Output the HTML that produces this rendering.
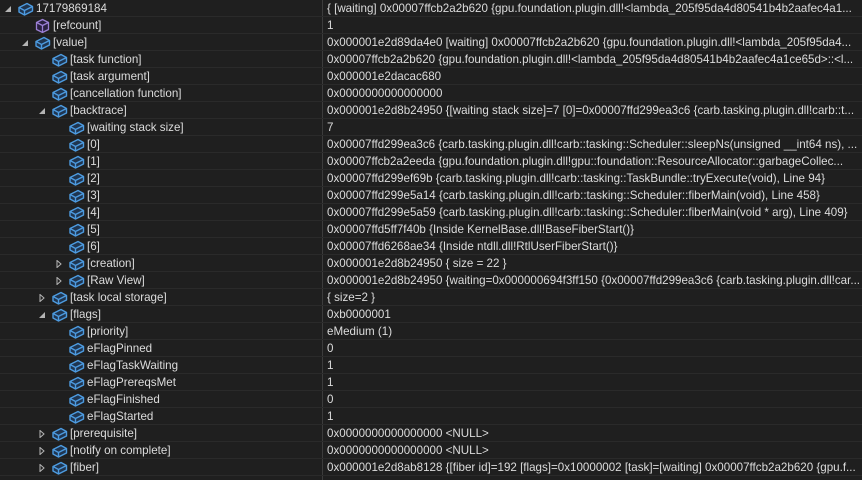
<!DOCTYPE html>
<html><head><meta charset="utf-8"><style>
*{margin:0;padding:0;box-sizing:border-box}
body{width:862px;height:480px;background:#1f1f1f;overflow:hidden;font-family:"Liberation Sans",sans-serif;font-size:11.6px;color:#dcdcdc}
.r{position:relative;height:17px;border-bottom:1px solid #2a2a2a;white-space:nowrap}
.n{position:absolute;left:0;top:0;width:322px;height:16px;overflow:hidden}
.v{position:absolute;left:327px;top:1px;width:535px;height:15px;line-height:16px;overflow:hidden}
.t{position:absolute;top:1px;line-height:16px}
.ic{position:absolute;top:1px}
.ex{position:absolute;top:5px}
.div{position:absolute;left:322px;top:0;width:1px;height:480px;background:#3c3c3c}
</style></head><body>
<svg width="0" height="0" style="position:absolute"><defs>
<g id="b"><path d="M2 6.5 L10 2.5 L15.5 5.5 L15.5 10 L7.5 14 L2 11 Z" fill="#1f3550" stroke="#4d9be0" stroke-width="1.4" stroke-linejoin="round"/><path d="M2 6.5 L7.5 9.5 L15.5 5.5 M7.5 9.5 L7.5 14" fill="none" stroke="#4d9be0" stroke-width="1.4"/></g>
<g id="p"><path d="M8.5 1.5 L14.5 4.5 L14.5 11.5 L8.5 14.5 L2.5 11.5 L2.5 4.5 Z" fill="#2a2040" stroke="#9b7fd4" stroke-width="1.3" stroke-linejoin="round"/><path d="M2.5 4.5 L8.5 7.5 L14.5 4.5 M8.5 7.5 L8.5 14.5" fill="none" stroke="#9b7fd4" stroke-width="1.3"/></g>
<g id="o"><path d="M6 1 L6 7 L0 7 Z" fill="#b4b4b4"/></g>
<g id="c"><path d="M1 0.5 L5 4 L1 7.5 Z" fill="none" stroke="#b4b4b4" stroke-width="1"/></g>
</defs></svg>
<div class="div"></div>
<div id="rows"></div>
<script>
var R=[
[0,'o','b','17179869184','{ [waiting] 0x00007ffcb2a2b620 {gpu.foundation.plugin.dll!&lt;lambda_205f95da4d80541b4b2aafec4a1...'],
[1,'','p','[refcount]','1'],
[1,'o','b','[value]','0x000001e2d89da4e0 [waiting] 0x00007ffcb2a2b620 {gpu.foundation.plugin.dll!&lt;lambda_205f95da4...'],
[2,'','b','[task function]','0x00007ffcb2a2b620 {gpu.foundation.plugin.dll!&lt;lambda_205f95da4d80541b4b2aafec4a1ce65d&gt;::&lt;l...'],
[2,'','b','[task argument]','0x000001e2dacac680'],
[2,'','b','[cancellation function]','0x0000000000000000'],
[2,'o','b','[backtrace]','0x000001e2d8b24950 {[waiting stack size]=7 [0]=0x00007ffd299ea3c6 {carb.tasking.plugin.dll!carb::t...'],
[3,'','b','[waiting stack size]','7'],
[3,'','b','[0]','0x00007ffd299ea3c6 {carb.tasking.plugin.dll!carb::tasking::Scheduler::sleepNs(unsigned __int64 ns), ...'],
[3,'','b','[1]','0x00007ffcb2a2eeda {gpu.foundation.plugin.dll!gpu::foundation::ResourceAllocator::garbageCollec...'],
[3,'','b','[2]','0x00007ffd299ef69b {carb.tasking.plugin.dll!carb::tasking::TaskBundle::tryExecute(void), Line 94}'],
[3,'','b','[3]','0x00007ffd299e5a14 {carb.tasking.plugin.dll!carb::tasking::Scheduler::fiberMain(void), Line 458}'],
[3,'','b','[4]','0x00007ffd299e5a59 {carb.tasking.plugin.dll!carb::tasking::Scheduler::fiberMain(void * arg), Line 409}'],
[3,'','b','[5]','0x00007ffd5ff7f40b {Inside KernelBase.dll!BaseFiberStart()}'],
[3,'','b','[6]','0x00007ffd6268ae34 {Inside ntdll.dll!RtlUserFiberStart()}'],
[3,'c','b','[creation]','0x000001e2d8b24950 { size = 22 }'],
[3,'c','b','[Raw View]','0x000001e2d8b24950 {waiting=0x000000694f3ff150 {0x00007ffd299ea3c6 {carb.tasking.plugin.dll!car...'],
[2,'c','b','[task local storage]','{ size=2 }'],
[2,'o','b','[flags]','0xb0000001'],
[3,'','b','[priority]','eMedium (1)'],
[3,'','b','eFlagPinned','0'],
[3,'','b','eFlagTaskWaiting','1'],
[3,'','b','eFlagPrereqsMet','1'],
[3,'','b','eFlagFinished','0'],
[3,'','b','eFlagStarted','1'],
[2,'c','b','[prerequisite]','0x0000000000000000 &lt;NULL&gt;'],
[2,'c','b','[notify on complete]','0x0000000000000000 &lt;NULL&gt;'],
[2,'c','b','[fiber]','0x000001e2d8ab8128 {[fiber id]=192 [flags]=0x10000002 [task]=[waiting] 0x00007ffcb2a2b620 {gpu.f...']
];
var h='';
R.forEach(function(r){
 var L=r[0]*17,ex='';
 if(r[1]=='o')ex='<svg class="ex" style="left:'+(5+L)+'px" width="8" height="8"><use href="#o"/></svg>';
 if(r[1]=='c')ex='<svg class="ex" style="left:'+(5+L)+'px" width="8" height="8"><use href="#c"/></svg>';
 h+='<div class="r"><div class="n">'+ex+'<svg class="ic" style="left:'+(17+L)+'px" width="17" height="16"><use href="#'+r[2]+'"/></svg><span class="t" style="left:'+(36+L)+'px">'+r[3]+'</span></div><div class="v">'+r[4]+'</div></div>';
});
document.getElementById('rows').innerHTML=h;
</script>
</body></html>
